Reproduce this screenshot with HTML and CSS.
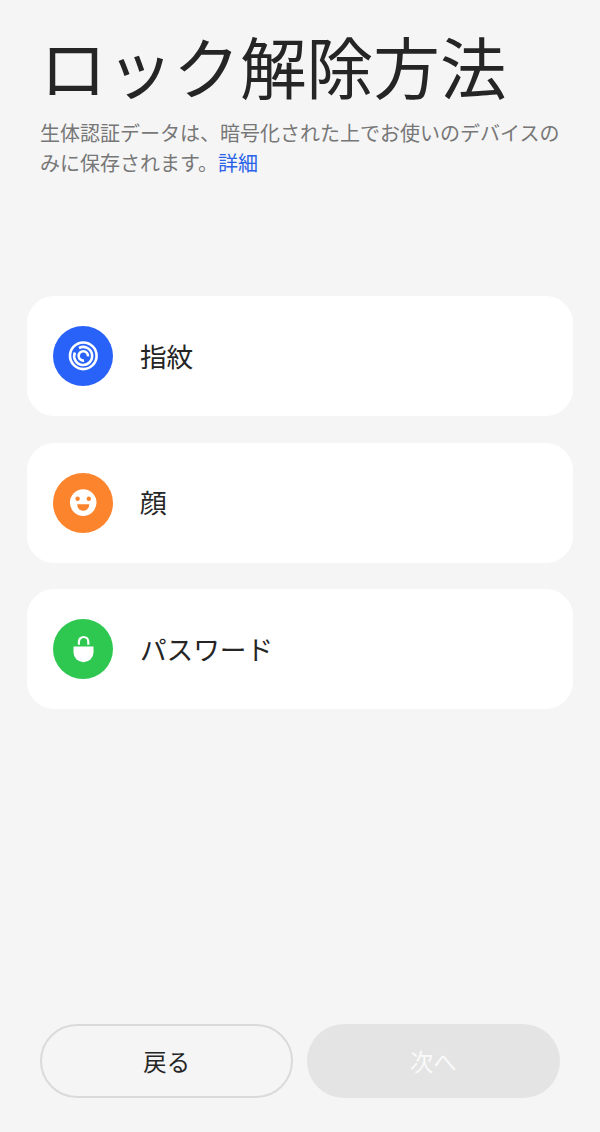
FILE: index.html
```html
<!DOCTYPE html>
<html lang="ja">
<head>
  <meta charset="UTF-8" />
  <title>ロック解除方法</title>
  <meta name="viewport" content="width=device-width, initial-scale=1" />
  <link rel="stylesheet" href="styles.css">
</head>
<body>

<main class="page">
  <header class="header">
    <h1>ロック解除方法</h1>
    <p>生体認証データは、暗号化された上でお使いのデバイスのみに保存されます。<a href="#">詳細</a></p>
  </header>

  <div class="methods">
    <div class="method">
      <svg class="icon" viewBox="0 0 60 60">
        <circle cx="30" cy="30" r="30" fill="#2962f8" />
        <g fill="none" stroke="#fff" stroke-width="2.6">
          <circle cx="30.3" cy="29.8" r="13.3" />
          <path d="M26 22A9 9 0 1 1 21.9 26.4" />
          <path d="M31 34.6A4.7 4.7 0 1 1 35 30.4" />
        </g>
      </svg>
      <span>指紋</span>
    </div>

    <div class="method">
      <svg class="icon" viewBox="0 0 60 60">
        <circle cx="30" cy="30" r="30" fill="#fc842d" />
        <circle cx="30.2" cy="29.6" r="13.3" fill="#fff" />
        <g fill="#fc842d">
          <circle cx="24.6" cy="25.7" r="2.2" />
          <circle cx="35.8" cy="25.7" r="2.2" />
          <path d="M24.2 31.2h12c0 4-2.5 6.5-6 6.5s-6-2.5-6-6.5z" />
        </g>
      </svg>
      <span>顔</span>
    </div>

    <div class="method">
      <svg class="icon" viewBox="0 0 60 60">
        <circle cx="30" cy="30" r="30" fill="#2ec750" />
        <path d="M25.9 25.8V22.7a4.7 4.7 0 0 1 9.4 0v3.1" fill="none" stroke="#fff" stroke-width="2.2" />
        <path d="M20.5 27.4h20v5.8a10 10 0 0 1-20 0z" fill="#fff" />
      </svg>
      <span>パスワード</span>
    </div>
  </div>

  <div class="actions">
    <button class="btn back" type="button">戻る</button>
    <button class="btn next" type="button" disabled>次へ</button>
  </div>
</main>

</body>
</html>
```
FILE: styles.css
```css
* { box-sizing: border-box; font-family: "Noto Sans CJK JP", sans-serif; }
body {
  margin: 0;
  background: #f5f5f5;
  color: #252525;
}
.page {
  height: 1132px;
  padding: 16px 26.6px 34px;
  display: flex;
  flex-direction: column;
}
.header {
  height: 280px;
  padding: 0 13.4px;
}
h1 {
  margin: 0 0 4px;
  font-size: 66.67px;
  font-weight: 400;
  line-height: 98px;
}
.header p {
  width: 525px;
  margin: 0;
  font-size: 20px;
  line-height: 30px;
  color: #777;
}
.header a {
  color: #2962e8;
  text-decoration: none;
}
.methods {
  display: flex;
  flex-direction: column;
  gap: 26.7px;
}
.method {
  height: 120px;
  padding: 0 26.6px;
  display: flex;
  align-items: center;
  gap: 26.7px;
  background: #fff;
  border-radius: 27px;
  font-size: 26.67px;
}
.method span {
  padding-bottom: 2px;
}
.icon {
  width: 60px;
  height: 60px;
}
.actions {
  display: flex;
  gap: 13.4px;
  margin-top: auto;
  padding: 0 13.4px;
}
.btn {
  width: 50%;
  height: 74px;
  padding: 0 0 1px;
  border: none;
  border-radius: 37px;
  font-size: 23.33px;
}
.back {
  background: transparent;
  border: 2px solid #dadada;
  color: #252525;
}
.next {
  background: #e4e4e4;
  color: #fafafa;
}
```
